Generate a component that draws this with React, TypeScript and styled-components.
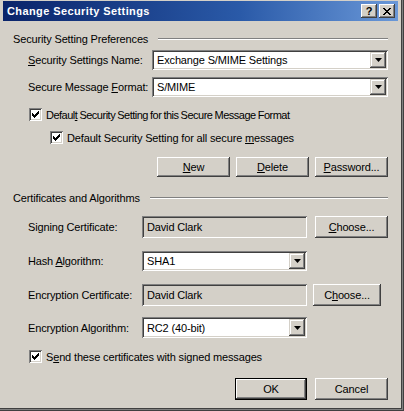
import React from 'react';
import styled, { createGlobalStyle } from 'styled-components';

const GlobalStyle = createGlobalStyle`
  html, body {
    margin: 0;
    padding: 0;
    background: #d4d0c8;
  }
  body {
    font-family: 'Liberation Sans', Arial, sans-serif;
    font-size: 11px;
    letter-spacing: -0.15px;
    color: #000;
  }
`;

const Window = styled.div`
  width: 404px;
  height: 411px;
  box-sizing: border-box;
  background: #d4d0c8;
  padding: 1px 6px 4px 3px;
  box-shadow: inset -1px -1px #404040, inset -2px -2px #808080, inset -3px -3px #404040;
  display: flex;
  flex-direction: column;
`;

const TitleBar = styled.div`
  height: 20px;
  display: flex;
  align-items: center;
  padding: 0 3px 0 4px;
  background: linear-gradient(to right, #0a246a 0%, #2a5aa8 60%, #6a98d8 100%);
`;

const Title = styled.div`
  flex: 1;
  color: #fff;
  font-weight: bold;
  font-size: 11px;
  letter-spacing: 0.4px;
`;

const CaptionButton = styled.div<{ $gap?: number }>`
  width: 16px;
  height: 14px;
  box-sizing: border-box;
  margin-left: ${({ $gap }) => $gap ?? 0}px;
  background: #d4d0c8;
  box-shadow: inset -1px -1px #404040, inset 1px 1px #fff, inset -2px -2px #808080;
  display: flex;
  align-items: center;
  justify-content: center;
  font-weight: bold;
  font-size: 11px;
  line-height: 1;
`;

const Content = styled.div`
  display: flex;
  flex-direction: column;
  padding: 0 10px 0 10px;
`;

const Heading = styled.div<{ $top: number }>`
  height: 14px;
  margin-top: ${({ $top }) => $top}px;
  display: flex;
  align-items: center;
`;

const HeadingLine = styled.div`
  flex: 1;
  height: 0;
  margin-left: 10px;
  border-top: 1px solid #808080;
  border-bottom: 1px solid #fff;
`;

const Row = styled.div<{ $top: number; $h: number }>`
  height: ${({ $h }) => $h}px;
  margin-top: ${({ $top }) => $top}px;
  display: flex;
  align-items: center;
`;

const Label = styled.div<{ $w: number }>`
  width: ${({ $w }) => $w}px;
  padding-left: 15px;
  box-sizing: border-box;
  flex-shrink: 0;
  white-space: nowrap;
`;

const Sunken = styled.div<{ $w?: number; $readOnly?: boolean }>`
  ${({ $w }) => ($w ? `width: ${$w}px;` : 'flex: 1;')}
  height: 100%;
  box-sizing: border-box;
  padding: 2px;
  background: ${({ $readOnly }) => ($readOnly ? '#d4d0c8' : '#fff')};
  box-shadow: inset 1px 1px #808080, inset -1px -1px #fff, inset 2px 2px #404040, inset -2px -2px #d4d0c8;
  display: flex;
  align-items: center;
`;

const FieldText = styled.div`
  flex: 1;
  padding-left: 3px;
  white-space: nowrap;
`;

const DropButton = styled.div`
  width: 16px;
  align-self: stretch;
  box-sizing: border-box;
  background: #d4d0c8;
  box-shadow: inset -1px -1px #404040, inset 1px 1px #d4d0c8, inset -2px -2px #808080, inset 2px 2px #fff;
  display: flex;
  align-items: center;
  justify-content: center;
`;

const Button = styled.div<{ $w?: number; $default?: boolean; $ml?: number }>`
  width: ${({ $w }) => $w ?? 73}px;
  height: 100%;
  margin-left: ${({ $ml }) => $ml ?? 0}px;
  box-sizing: border-box;
  flex-shrink: 0;
  background: #d4d0c8;
  border: ${({ $default }) => ($default ? '1px solid #000' : 'none')};
  box-shadow: inset -1px -1px #404040, inset 1px 1px #fff, inset -2px -2px #808080, inset 2px 2px #d4d0c8;
  display: flex;
  align-items: center;
  justify-content: center;
  white-space: nowrap;
`;

const ButtonRow = styled(Row)`
  justify-content: flex-end;
`;

const CheckRow = styled.div<{ $top: number; $indent: number }>`
  height: 13px;
  margin-top: ${({ $top }) => $top}px;
  padding-left: ${({ $indent }) => $indent}px;
  display: flex;
  align-items: center;
`;

const CheckLabel = styled.span<{ $tight?: boolean }>`
  white-space: nowrap;
  letter-spacing: ${({ $tight }) => ($tight ? '-0.5px' : 'inherit')};
  word-spacing: ${({ $tight }) => ($tight ? '-0.5px' : 'normal')};
`;

const CheckBox = styled.div`
  width: 13px;
  height: 13px;
  box-sizing: border-box;
  background: #fff;
  box-shadow: inset 1px 1px #808080, inset -1px -1px #fff, inset 2px 2px #404040, inset -2px -2px #d4d0c8;
  display: flex;
  align-items: center;
  justify-content: center;
  margin-right: 4px;
  flex-shrink: 0;
`;

const Key = styled.span`
  text-decoration: underline;
`;

const Arrow = () => (
  <svg width="7" height="4" viewBox="0 0 7 4">
    <path d="M0 0 H7 L3.5 4 Z" fill="#000" />
  </svg>
);

const Check = () => (
  <svg width="7" height="7" viewBox="0 0 7 7" shapeRendering="crispEdges">
    <path d="M6 0h1v3h-1v1h-1v1h-1v1h-1v1h-1v-1h-1v-1h-1v-3h1v1h1v1h1v-1h1v-1h1z" fill="#000" />
  </svg>
);

const CloseGlyph = () => (
  <svg width="8" height="7" viewBox="0 0 8 7" shapeRendering="crispEdges">
    <path d="M0 0h2v1h1v1h2v-1h1v-1h2v1h-1v1h-1v1h-1v1h1v1h1v1h1v1h-2v-1h-1v-1h-2v1h-1v1h-2v-1h1v-1h1v-1h1v-1h-1v-1h-1z" fill="#000" />
  </svg>
);

const Combo: React.FC<{ text: string; w?: number }> = ({ text, w }) => (
  <Sunken $w={w}>
    <FieldText>{text}</FieldText>
    <DropButton>
      <Arrow />
    </DropButton>
  </Sunken>
);

const CheckOption: React.FC<{ top: number; indent: number; tight?: boolean; children: React.ReactNode }> = ({
  top,
  indent,
  tight,
  children,
}) => (
  <CheckRow $top={top} $indent={indent}>
    <CheckBox>
      <Check />
    </CheckBox>
    <CheckLabel $tight={tight}>{children}</CheckLabel>
  </CheckRow>
);

export default function App() {
  return (
    <>
      <GlobalStyle />
      <Window>
        <TitleBar>
          <Title>Change Security Settings</Title>
          <CaptionButton>?</CaptionButton>
          <CaptionButton $gap={2}>
            <CloseGlyph />
          </CaptionButton>
        </TitleBar>

        <Content>
          <Heading $top={11}>
            <span>Security Setting Preferences</span>
            <HeadingLine />
          </Heading>

          <Row $top={4} $h={20}>
            <Label $w={139}>
              <Key>S</Key>ecurity Settings Name:
            </Label>
            <Combo text="Exchange S/MIME Settings" />
          </Row>

          <Row $top={7} $h={20}>
            <Label $w={139}>
              Secure Message <Key>F</Key>ormat:
            </Label>
            <Combo text="S/MIME" />
          </Row>

          <CheckOption top={11} indent={16} tight>
            Defaul<Key>t</Key> Security Setting for this Secure Message Format
          </CheckOption>
          <CheckOption top={10} indent={37}>
            Default Security Setting for all secure <Key>m</Key>essages
          </CheckOption>

          <ButtonRow $top={13} $h={20}>
            <Button>
              <span>
                <Key>N</Key>ew
              </span>
            </Button>
            <Button $ml={6}>
              <span>
                <Key>D</Key>elete
              </span>
            </Button>
            <Button $ml={6}>
              <span>
                <Key>P</Key>assword...
              </span>
            </Button>
          </ButtonRow>

          <Heading $top={14}>
            <span>Certificates and Algorithms</span>
            <HeadingLine />
          </Heading>

          <Row $top={11} $h={22}>
            <Label $w={129}>Signing Certificate:</Label>
            <Sunken $w={165} $readOnly>
              <FieldText>David Clark</FieldText>
            </Sunken>
            <Button $ml={8}>
              <span>
                <Key>C</Key>hoose...
              </span>
            </Button>
          </Row>

          <Row $top={13} $h={20}>
            <Label $w={129}>
              Hash <Key>A</Key>lgorithm:
            </Label>
            <Combo text="SHA1" w={165} />
          </Row>

          <Row $top={13} $h={22}>
            <Label $w={129}>Encryption Certificate:</Label>
            <Sunken $w={165} $readOnly>
              <FieldText>David Clark</FieldText>
            </Sunken>
            <Button $ml={6} $w={68}>
              <span>
                C<Key>h</Key>oose...
              </span>
            </Button>
          </Row>

          <Row $top={11} $h={21}>
            <Label $w={129}>
              Encryption Al<Key>g</Key>orithm:
            </Label>
            <Combo text="RC2 (40-bit)" w={165} />
          </Row>

          <CheckOption top={12} indent={16}>
            S<Key>e</Key>nd these certificates with signed messages
          </CheckOption>

          <ButtonRow $top={15} $h={22}>
            <Button $w={72} $default>
              OK
            </Button>
            <Button $ml={8}>Cancel</Button>
          </ButtonRow>
        </Content>
      </Window>
    </>
  );
}
